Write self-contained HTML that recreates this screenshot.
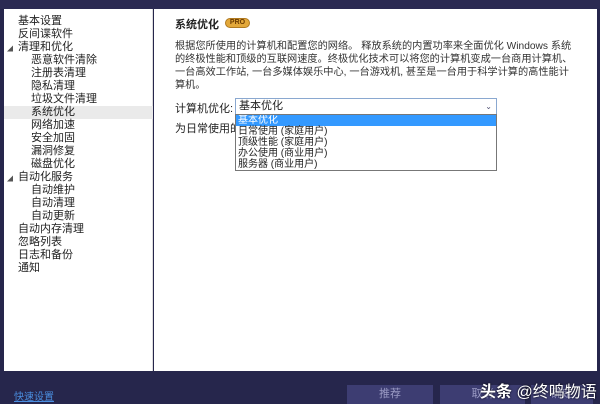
<!DOCTYPE html>
<html><head><meta charset="utf-8"><style>
*{margin:0;padding:0;box-sizing:border-box}
body{width:600px;height:404px;overflow:hidden;background:#26264c;font-family:"Liberation Sans","Noto Sans CJK SC",sans-serif;position:relative;color:#222}
.top{position:absolute;left:0;top:0;width:600px;height:9px;background:#2b2a52}
.left{position:absolute;left:4px;top:9px;width:149px;height:362px;background:#fff;border-right:1px solid #ddd}
.right{position:absolute;left:154px;top:9px;width:443px;height:362px;background:#fff}
.it{position:absolute;font-size:11px;line-height:13px;white-space:nowrap;color:#222}
.arr{position:absolute;left:7px;font-size:6px;color:#555}
.sel{position:absolute;left:4px;top:106px;width:149px;height:13px;background:#eaeaea}
.t{position:absolute;font-size:11px;white-space:nowrap}
.btn{position:absolute;top:385px;height:19px;background:#3d3d72;color:#9a9ac4;font-size:11px;text-align:center;line-height:19px}
.o{position:absolute;left:0;width:260px;height:11px;line-height:11px;padding-left:2px;font-size:10px;white-space:nowrap}
</style></head><body>
<div class="top"></div>
<div class="left"></div>
<div class="right"></div>
<div class="sel"></div>
<div class="it" style="left:18px;top:15px">基本设置</div>
<div class="it" style="left:18px;top:28px">反间谍软件</div>
<div class="arr" style="top:44px">◢</div>
<div class="it" style="left:18px;top:41px">清理和优化</div>
<div class="it" style="left:31px;top:54px">恶意软件清除</div>
<div class="it" style="left:31px;top:67px">注册表清理</div>
<div class="it" style="left:31px;top:80px">隐私清理</div>
<div class="it" style="left:31px;top:93px">垃圾文件清理</div>
<div class="it" style="left:31px;top:106px">系统优化</div>
<div class="it" style="left:31px;top:119px">网络加速</div>
<div class="it" style="left:31px;top:132px">安全加固</div>
<div class="it" style="left:31px;top:145px">漏洞修复</div>
<div class="it" style="left:31px;top:158px">磁盘优化</div>
<div class="arr" style="top:174px">◢</div>
<div class="it" style="left:18px;top:171px">自动化服务</div>
<div class="it" style="left:31px;top:184px">自动维护</div>
<div class="it" style="left:31px;top:197px">自动清理</div>
<div class="it" style="left:31px;top:210px">自动更新</div>
<div class="it" style="left:18px;top:223px">自动内存清理</div>
<div class="it" style="left:18px;top:236px">忽略列表</div>
<div class="it" style="left:18px;top:249px">日志和备份</div>
<div class="it" style="left:18px;top:262px">通知</div>

<div class="t" style="left:175px;top:16px;font-weight:bold;font-size:11px">系统优化</div>
<div style="position:absolute;left:225px;top:18px;width:25px;height:10px;border-radius:5px;background:#e3a83a;border:1px solid #b07a20;font-size:7px;line-height:8px;text-align:center;color:#6a3a00;font-weight:bold">PRO</div>
<div style="position:absolute;left:175px;top:40px;width:400px;font-size:10.2px;line-height:13px;color:#333">根据您所使用的计算机和配置您的网络。 释放系统的内置功率来全面优化 Windows 系统的终极性能和顶级的互联网速度。终极优化技术可以将您的计算机变成一台商用计算机、一台高效工作站, 一台多媒体娱乐中心, 一台游戏机, 甚至是一台用于科学计算的高性能计算机。</div>
<div class="t" style="left:175px;top:100px">计算机优化:</div>
<div style="position:absolute;left:235px;top:98px;width:262px;height:17px;border:1px solid #8aa8d0;background:#fff;font-size:11px;line-height:15px;padding-left:3px">基本优化<span style="position:absolute;right:4px;top:0;font-size:8px;color:#557">⌄</span></div>
<div class="t" style="left:175px;top:120px">为日常使用的</div>
<div style="position:absolute;left:235px;top:114px;width:262px;height:57px;border:1px solid #777;background:#fff;overflow:hidden">
<div class="o" style="top:0;background:#3399ff;color:#fff">基本优化</div>
<div class="o" style="top:11px">日常使用 (家庭用户)</div>
<div class="o" style="top:22px">顶级性能 (家庭用户)</div>
<div class="o" style="top:33px">办公使用 (商业用户)</div>
<div class="o" style="top:44px">服务器 (商业用户)</div>
</div>

<div class="t" style="left:14px;top:388px;color:#4a8ee0;text-decoration:underline;font-size:10px">快速设置</div>
<div class="btn" style="left:347px;width:86px">推荐</div>
<div class="btn" style="left:440px;width:85px">取消</div>
<div class="btn" style="left:531px;width:62px">确定</div>
<div style="position:absolute;left:480px;top:378px;font-size:16px;color:#fff;font-weight:bold;text-shadow:0 0 2px #000;white-space:nowrap">头条 <span style="font-weight:normal">@终鸣物语</span></div>
</body></html>
